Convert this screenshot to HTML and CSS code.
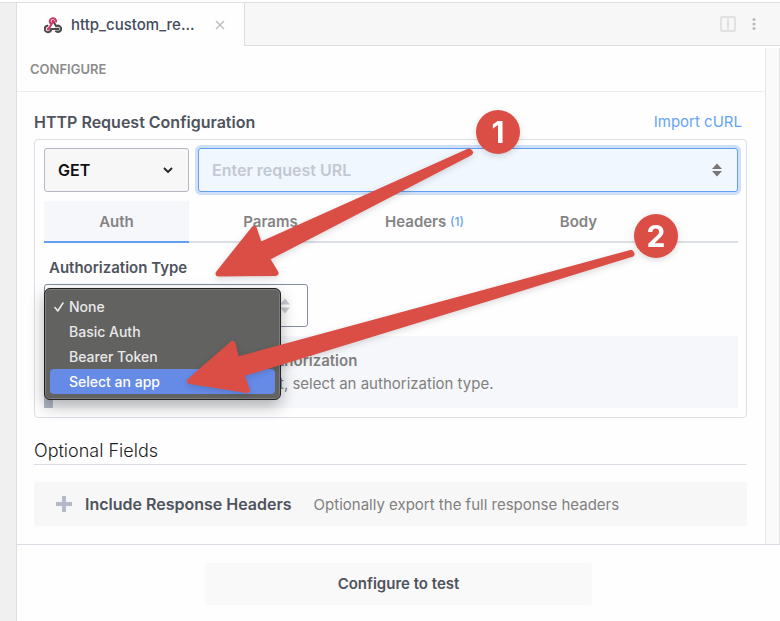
FILE: index.html
```html
<!DOCTYPE html>
<html lang="en">
<head>
<meta charset="utf-8">
<meta name="viewport" content="width=device-width, initial-scale=1">
<title>http_custom_re...</title>
<link rel="stylesheet" href="styles.css">
</head>
<body>
<div class="app">
  <div class="gutter"></div>
  <div class="pane">
    <header class="tabbar">
      <div class="file-tab">
        <svg class="webhook" viewBox="0 0 18 16" aria-hidden="true">
          <g fill="none" stroke-width="2" stroke-linecap="round">
            <path d="M3.400 8.800A3.200 3.200 0 1 0 7.200 12H14" stroke="#4b4b4b"/>
            <path d="M9.400 4.400 12.200 9.300A3.100 3.100 0 1 1 12 14.200" stroke="#4b4b4b"/>
            <path d="M6.400 6.400A3.200 3.200 0 1 1 12.100 4.600M9 4.400 4.800 11.800" stroke="#cb3a66"/>
          </g>
          <circle cx="9" cy="4.200" r="1.500" fill="#cb3a66"/>
          <circle cx="4.300" cy="12" r="1.600" fill="#cb3a66"/>
          <circle cx="14" cy="12" r="1.600" fill="#4b4b4b"/>
        </svg>
        <span class="file-name">http_custom_re...</span>
        <button class="icon-btn close" type="button" aria-label="Close tab">
          <svg width="10" height="10" viewBox="0 0 10 10"><path d="M1 1l8 8M9 1l-8 8" stroke="#bdbdbd" stroke-width="1.400"/></svg>
        </button>
      </div>
      <div class="tabbar-actions">
        <button class="icon-btn" type="button" aria-label="Split view">
          <svg width="16" height="16" viewBox="0 0 16 16"><rect x="1" y="1" width="14" height="14" rx="1" fill="none" stroke="#e2e2e2" stroke-width="2"/><path d="M8 1v14" stroke="#e2e2e2" stroke-width="2"/></svg>
        </button>
        <button class="icon-btn" type="button" aria-label="More options">
          <svg width="4" height="14" viewBox="0 0 4 14" fill="#bcbcbc"><circle cx="2" cy="2.500" r="1.600"/><circle cx="2" cy="7" r="1.600"/><circle cx="2" cy="11.500" r="1.600"/></svg>
        </button>
      </div>
    </header>

    <div class="body">
      <main class="content">
        <h1 class="section-name">CONFIGURE</h1>
        <div class="form">
          <div class="title-row">
            <h2 class="title">HTTP Request Configuration</h2>
            <a class="import" href="#">Import cURL</a>
          </div>
          <section class="card">
            <div class="request-row">
              <div class="select-wrap method">
                <select class="method-select" aria-label="Method"><option>GET</option></select>
                <svg class="chevron" width="10" height="8" viewBox="0 0 10 8"><path d="M1 2l4 4 4-4" fill="none" stroke="#222" stroke-width="1.800"/></svg>
              </div>
              <div class="select-wrap url">
                <input class="url-input" type="text" placeholder="Enter request URL" aria-label="Request URL">
                <svg class="sorter" width="10" height="14" viewBox="0 0 10 14" fill="#777"><path d="M5 0.500 10 6H0zM5 13.500 10 8H0z"/></svg>
              </div>
            </div>
            <nav class="tabs">
              <button class="tab active" type="button">Auth</button>
              <button class="tab" type="button">Params</button>
              <button class="tab" type="button">Headers <span class="count">(1)</span></button>
              <button class="tab" type="button">Body</button>
            </nav>
            <label class="auth-label" for="auth-type">Authorization Type</label>
            <div class="select-wrap auth">
              <select class="auth-select" id="auth-type"><option></option></select>
              <svg class="sorter" width="10" height="16" viewBox="0 0 10 16" fill="#c9cbd2"><path d="M5 0.500 10 6.500H0zM5 15.500 10 9.500H0z"/></svg>
              <ul class="menu">
                <li class="option"><svg class="check" width="10" height="10" viewBox="0 0 10 10"><path d="M1 5.500 3.800 9 9 1" fill="none" stroke="#eee" stroke-width="1.500" stroke-linecap="round" stroke-linejoin="round"/></svg>None</li>
                <li class="option">Basic Auth</li>
                <li class="option">Bearer Token</li>
                <li class="option selected">Select an app</li>
              </ul>
            </div>
            <div class="notice">
              <strong class="notice-title">thorization</strong>
              <p class="notice-text">t, select an authorization type.</p>
            </div>
          </section>
          <h2 class="optional">Optional Fields</h2>
          <button class="field" type="button">
            <svg width="16" height="16" viewBox="0 0 16 16"><path d="M8 0v16M0 8h16" stroke="#b6bac6" stroke-width="4"/></svg>
            <strong class="field-name">Include Response Headers</strong>
            <span class="field-help">Optionally export the full response headers</span>
          </button>
        </div>
      </main>
      <div class="rail"></div>
    </div>

    <footer class="footer">
      <button class="test" type="button">Configure to test</button>
    </footer>
  </div>

  <svg class="annotations" width="780" height="621" viewBox="0 0 780 621" aria-hidden="true">
    <g fill="#da4e46" stroke="#da4e46" stroke-width="6" stroke-linejoin="round">
      <path d="M218.500 273.500 254 229 259.500 245.500 469 151.500 470 152.500 266.500 258 275.500 273z"/>
      <path d="M190 381 232.500 344 236.500 360 631 253 631.500 254 241 374 247 390z"/>
    </g>
    <g fill="#da4e46"><circle cx="498" cy="132" r="22"/><circle cx="656" cy="236" r="22"/></g>
    <g class="marks" fill="#fff" text-anchor="middle"><text x="498" y="143">1</text><text x="656" y="247">2</text></g>
  </svg>
</div>
</body>
</html>
```
FILE: styles.css
```css
* { box-sizing: border-box; }

body {
  margin: 0;
  background: #fefefe;
  color: #4f535d;
  font-family: Inter, "Liberation Sans", sans-serif;
  font-size: 15px;
}

button, input, select { font: inherit; color: inherit; }
button { border: 0; padding: 0; background: none; cursor: pointer; }
svg { display: block; }
h1, h2, p, ul { margin: 0; padding: 0; }

.app {
  position: relative;
  display: flex;
  min-height: 100vh;
  padding-top: 2px;
  overflow: hidden;
}
.gutter { width: 16px; background: #f0f0f0; border-top: 1px solid #e0e0e0; }
.pane {
  flex: 1;
  display: flex;
  flex-direction: column;
  border-left: 1px solid #dedee0;
  border-top: 1px solid #e0e0e0;
}

.tabbar { display: flex; height: 43px; }
.file-tab {
  display: flex;
  align-items: center;
  width: 228px;
  padding: 0 19px 0 27px;
  border-right: 1px solid #d9dce2;
}
.webhook { width: 18px; height: 18px; margin-right: 9px; }
.file-name { flex: 1; color: #444c5b; font-size: 15px; font-weight: 500; }
.icon-btn { flex: none; }
.tabbar-actions {
  flex: 1;
  display: flex;
  align-items: center;
  justify-content: flex-end;
  gap: 16px;
  padding-right: 24px;
  background: #f7f7f7;
  border-bottom: 1px solid #dedfe1;
}

.body { flex: 1; display: flex; padding-top: 2px; }
.content { flex: 1; }
.rail { width: 15px; background: #fafafa; border: 1px solid #e4e5e8; border-width: 0 1px; }

.section-name {
  height: 44px;
  padding-left: 13px;
  border-bottom: 1px solid #ededee;
  color: #8c8c8c;
  font-size: 13px;
  font-weight: 600;
  line-height: 43px;
}
.form { padding: 20px 18px 18px 17px; }
.title-row {
  display: flex;
  justify-content: space-between;
  height: 27px;
  padding-right: 5px;
  line-height: 20px;
}
.title { font-size: 16px; font-weight: 600; }
.import { color: #64a5f3; text-decoration: none; }

.card {
  padding: 8px 8px 9px 9px;
  border: 1px solid #dcdfe5;
  border-radius: 4px;
}
.request-row { display: flex; gap: 9px; }
.select-wrap { position: relative; height: 44px; }
.method { width: 145px; }
.url { flex: 1; }
.method-select, .url-input, .auth-select {
  appearance: none;
  width: 100%;
  height: 100%;
  padding: 0 13px;
  border-radius: 3px;
  outline: 0;
}
.method-select {
  background: #f7f7f7;
  border: 1px solid #b4b8c3;
  color: #111;
  font-size: 16px;
  font-weight: 600;
}
.url-input {
  background: #f0f7ff;
  border: 1px solid #629df2;
  box-shadow: 0 0 0 3px #cfdff8;
  font-size: 16px;
  font-weight: 600;
}
.url-input::placeholder { color: #c3c8d2; opacity: 1; }
.chevron, .sorter { position: absolute; right: 16px; top: 0; bottom: 0; margin: auto 0; pointer-events: none; }

.tabs {
  display: flex;
  gap: 9px;
  height: 42px;
  margin-top: 9px;
  box-shadow: inset 0 -2px #dcdfe5;
}
.tab { width: 145px; border-bottom: 2px solid transparent; color: #848484; font-weight: 600; }
.tab.active { background: #f6f7fb; border-color: #629ff2; }
.count { color: #64a5f3; font-size: 12px; font-weight: 500; vertical-align: 1px; }

.auth-label { display: block; height: 41px; padding: 14px 0 0 5px; font-weight: 600; line-height: 22px; }
.auth { width: 264px; height: 43px; }
.auth-select { background: #fff; border: 1px solid #868da3; }
.auth .sorter { right: 18px; }

.menu {
  position: absolute;
  top: 4px;
  left: 0;
  z-index: 1;
  width: 237px;
  padding: 5px;
  list-style: none;
  background: #626261;
  border: 1px solid #222;
  border-radius: 6px;
  box-shadow: inset 0 0 0 1px #7c7c7c, 0 6px 16px rgba(0, 0, 0, 0.3);
}
.option {
  position: relative;
  padding-left: 19px;
  border-radius: 4px;
  color: #e9e9e9;
  font-size: 14px;
  font-weight: 500;
  line-height: 25px;
}
.option.selected { background: #668be7; color: #fff; }
.check { position: absolute; left: 4px; top: 8px; }

.notice {
  height: 72px;
  margin-top: 9px;
  padding: 13px 0 0 226px;
  background: #f6f7fa;
  border-left: 9px solid #b2b7c6;
  color: #808080;
  line-height: 23px;
}
.notice-title { font-weight: 600; }

.optional {
  margin-top: 20px;
  border-bottom: 1px solid #dadde4;
  color: #222;
  font-size: 18px;
  font-weight: 300;
  line-height: 26px;
}
.field {
  display: flex;
  align-items: center;
  width: 100%;
  height: 44px;
  margin-top: 17px;
  padding: 0 22px;
  background: #f7f7f7;
  border-radius: 3px;
}
.field-name { margin: 0 22px 0 13px; font-size: 16px; font-weight: 600; }
.field-help { color: #808080; }

.footer {
  display: flex;
  justify-content: center;
  padding: 18px 0 16px;
  border-top: 1px solid #dadde4;
}
.test {
  width: 387px;
  height: 42px;
  padding-bottom: 2px;
  background: #f9f9f9;
  border-radius: 3px;
  font-weight: 600;
}

.annotations {
  position: absolute;
  top: 0;
  left: 0;
  z-index: 2;
  pointer-events: none;
  filter: drop-shadow(0 2px 3px rgba(0, 0, 0, 0.15));
}
.marks { font-size: 30px; font-weight: 700; }
```
